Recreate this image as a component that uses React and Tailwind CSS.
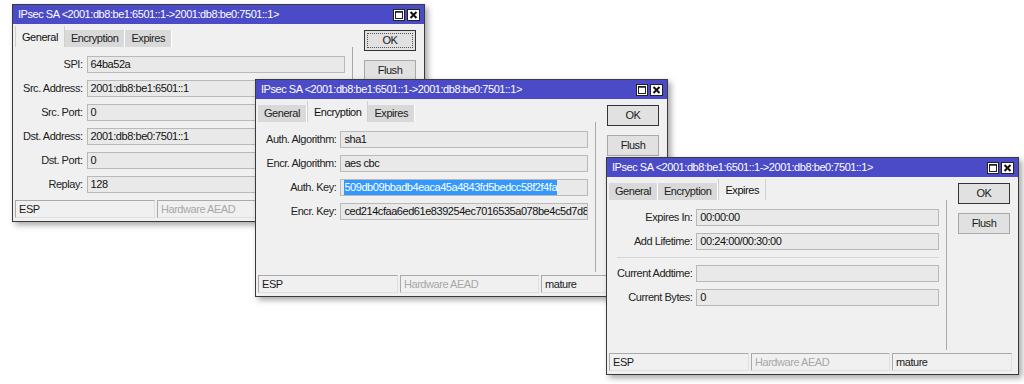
import React from 'react';

const TITLE = 'IPsec SA <2001:db8:be1:6501::1->2001:db8:be0:7501::1>';

const windows = [
  {
    id: 'general',
    pos: 'left-[12px] top-[4px] z-10',
    tab: 'General',
    okFocus: true,
    state: '',
    rows: [
      { label: 'SPI:', value: '64ba52a' },
      { label: 'Src. Address:', value: '2001:db8:be1:6501::1' },
      { label: 'Src. Port:', value: '0' },
      { label: 'Dst. Address:', value: '2001:db8:be0:7501::1' },
      { label: 'Dst. Port:', value: '0' },
      { label: 'Replay:', value: '128' },
    ],
  },
  {
    id: 'encryption',
    pos: 'left-[255px] top-[79px] z-20',
    tab: 'Encryption',
    state: 'mature',
    rows: [
      { label: 'Auth. Algorithm:', value: 'sha1' },
      { label: 'Encr. Algorithm:', value: 'aes cbc' },
      { label: 'Auth. Key:', value: '509db09bbadb4eaca45a4843fd5bedcc58f2f4fa', selected: true },
      { label: 'Encr. Key:', value: 'ced214cfaa6ed61e839254ec7016535a078be4c5d7d8' },
    ],
  },
  {
    id: 'expires',
    pos: 'left-[606px] top-[157px] z-30',
    tab: 'Expires',
    state: 'mature',
    rows: [
      { label: 'Expires In:', value: '00:00:00' },
      { label: 'Add Lifetime:', value: '00:24:00/00:30:00' },
      { separator: true },
      { label: 'Current Addtime:', value: '' },
      { label: 'Current Bytes:', value: '0' },
    ],
  },
];

const TABS = ['General', 'Encryption', 'Expires'];

const TitleButtons = () => (
  <div className="flex gap-[2px]">
    <svg width="12" height="12" viewBox="0 0 12 12">
      <rect x="0.5" y="0.5" width="11" height="11" fill="#fff" stroke="#222" />
      <rect x="2.5" y="2.5" width="7" height="7" fill="none" stroke="#222" />
      <line x1="2" y1="3" x2="10" y2="3" stroke="#222" strokeWidth="1.5" />
    </svg>
    <svg width="13" height="12" viewBox="0 0 13 12">
      <rect x="0.5" y="0.5" width="12" height="11" fill="#fff" stroke="#222" />
      <path d="M3.5 3 L9.5 9 M9.5 3 L3.5 9" stroke="#111" strokeWidth="2" />
    </svg>
  </div>
);

const Field = ({ value, selected }) => (
  <div className="min-w-0 h-[17px] bg-[#e9e9e9] border border-[#b9b9b9] px-[3px] flex items-center overflow-hidden whitespace-nowrap text-[#111]">
    {selected ? <span className="bg-[#3399ff] text-white">{value}</span> : value}
  </div>
);

const IpsecWindow = ({ pos, tab, okFocus, rows, state }) => (
  <div className={`absolute ${pos} w-[413px] h-[218px] border border-[#3a3a3a] bg-[#f0f0f0] flex flex-col shadow-[3px_3px_6px_rgba(0,0,0,0.35)]`}>
    {/* title */}
    <div className="h-[19px] bg-[#4b4bc8] flex items-center justify-between pl-[5px] pr-[4px] text-white">
      <span className="whitespace-nowrap">{TITLE}</span>
      <TitleButtons />
    </div>

    <div className="flex flex-1 min-h-0 pl-[2px] pt-[2px]">
      <div className="w-[338px] flex flex-col">
        {/* tabs */}
        <div className="flex items-end h-[21px]">
          {TABS.map(t =>
            t === tab ? (
              <div key={t} className="h-[21px] px-[6px] pt-[3px] bg-[#f0f0f0] border-x border-[#d0d0d0] text-[#111]">
                {t}
              </div>
            ) : (
              <div key={t} className="h-[17px] px-[6px] flex items-center bg-[#d9d9d9] border-r border-white text-[#222]">
                {t}
              </div>
            )
          )}
        </div>
        {/* panel */}
        <div className="flex-1 border-r border-[#a8a8a8] pl-[8px] pr-[7px] pt-[9px]">
          <div className="grid grid-cols-[auto_minmax(0,1fr)] gap-x-[4px] gap-y-[7px] items-center">
            {rows.map((r, i) =>
              r.separator ? (
                <div key={i} className="col-span-2 h-px bg-[#d4d4d4]" />
              ) : (
                <React.Fragment key={i}>
                  <div className="text-right whitespace-nowrap text-[#222]">{r.label}</div>
                  <Field value={r.value} selected={r.selected} />
                </React.Fragment>
              )
            )}
          </div>
        </div>
      </div>

      {/* buttons */}
      <div className="flex flex-col gap-[9px] ml-[11px] pt-[4px]">
        <div className="w-[52px] h-[21px] border border-[#333] bg-[#e1e1e1] p-[2px]">
          <div className={`w-full h-full flex items-center justify-center ${okFocus ? 'border border-dotted border-[#555]' : ''}`}>
            OK
          </div>
        </div>
        <div className="w-[52px] h-[21px] border border-[#a9a9a9] bg-[#e1e1e1] flex items-center justify-center">
          Flush
        </div>
      </div>
    </div>

    {/* status bar */}
    <div className="flex gap-[2px] pl-[2px] mt-[3px] mb-[3px] h-[18px]">
      <div className="w-[140px] border border-[#a9a9a9] border-b-[#e0e0e0] border-r-[#e0e0e0] px-[3px] flex items-center">ESP</div>
      <div className="w-[139px] border border-[#a9a9a9] border-b-[#e0e0e0] border-r-[#e0e0e0] px-[3px] flex items-center text-[#a8a8a8]">Hardware AEAD</div>
      <div className="w-[120px] border border-[#a9a9a9] border-b-[#e0e0e0] border-r-[#e0e0e0] px-[3px] flex items-center">{state}</div>
    </div>
  </div>
);

export default function App() {
  return (
    <div className="relative w-[1024px] h-[384px] bg-white overflow-hidden font-['Liberation_Sans',Arial,sans-serif] text-[11px] tracking-[-0.45px] text-[#1a1a1a]">
      {windows.map(w => (
        <IpsecWindow key={w.id} {...w} />
      ))}
    </div>
  );
}
